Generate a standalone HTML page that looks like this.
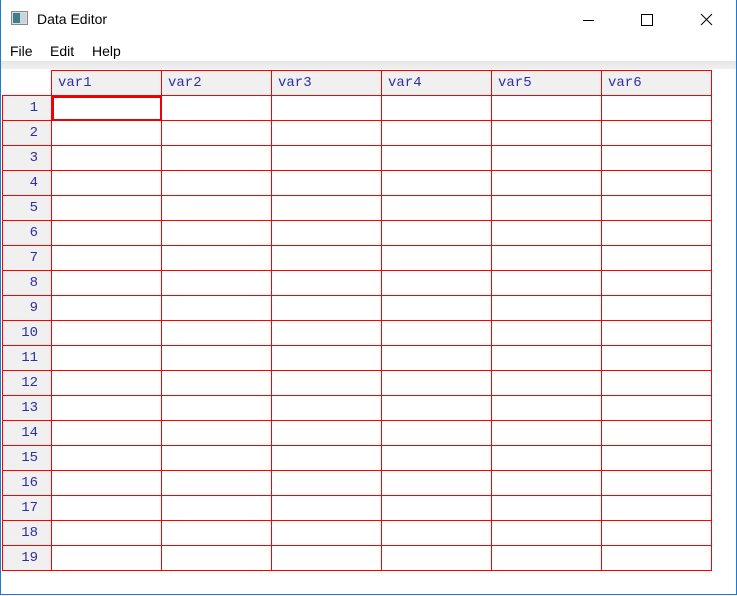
<!DOCTYPE html><html><head><style>
body{margin:0;width:737px;height:596px;background:#fff;position:relative;overflow:hidden;font-family:"Liberation Sans",sans-serif}
.win{position:absolute;left:0;top:0;width:735px;height:594px;border:1px solid #1a7ad4;border-top:none}
.t{position:absolute;font-size:14px;color:#000}
.strip{position:absolute;left:1px;top:61px;width:735px;height:8px;background:linear-gradient(#e6e6e6,#f0f0f0)}
.hdr{position:absolute;left:51px;top:70px;width:661px;height:25px;background:#f0f0f0}
.rh{position:absolute;left:2px;top:95px;width:49px;height:475px;background:#f0f0f0}
.vl{position:absolute;width:1px;background:#f00}
.hl{position:absolute;height:1px;background:#f00}
.m{position:absolute;font-family:"Liberation Mono",monospace;font-size:14px;color:#2f2fa0;line-height:25px}
.r{width:36px;text-align:right;left:2px}
</style></head><body>
<div class="win"></div>
<svg style="position:absolute;left:11px;top:11px" width="18" height="16"><rect x="0.5" y="0.5" width="16" height="13" fill="#ddd" stroke="#888"/><rect x="2" y="2" width="7" height="10" fill="#3f7f88"/><rect x="9" y="2" width="6" height="10" fill="#c8d4e0"/></svg>
<div class="t" style="left:37px;top:11px">Data Editor</div>
<svg style="position:absolute;left:580px;top:12px" width="140" height="16" fill="none" stroke="#000" stroke-width="1"><path d="M3 8.5H14"/><rect x="61.5" y="2.5" width="11" height="11"/><path d="M121 2L132 13M132 2L121 13"/></svg>
<div class="t" style="left:10px;top:43px">File</div>
<div class="t" style="left:50px;top:43px">Edit</div>
<div class="t" style="left:92px;top:43px">Help</div>
<div class="strip"></div>
<div class="hdr"></div><div class="rh"></div>
<div class="vl" style="left:2px;top:95px;height:476px"></div>
<div class="vl" style="left:51px;top:70px;height:501px"></div>
<div class="vl" style="left:161px;top:70px;height:501px"></div>
<div class="vl" style="left:271px;top:70px;height:501px"></div>
<div class="vl" style="left:381px;top:70px;height:501px"></div>
<div class="vl" style="left:491px;top:70px;height:501px"></div>
<div class="vl" style="left:601px;top:70px;height:501px"></div>
<div class="vl" style="left:711px;top:70px;height:501px"></div>
<div class="hl" style="left:51px;top:70px;width:661px"></div>
<div class="hl" style="left:2px;top:95px;width:710px;height:476px;background:repeating-linear-gradient(#f00 0 1px,transparent 1px 25px)"></div>
<div style="position:absolute;left:52px;top:96px;width:106px;height:21px;border:2px solid #e00"></div>
<div class="m" style="left:58px;top:71px">var1</div>
<div class="m" style="left:168px;top:71px">var2</div>
<div class="m" style="left:278px;top:71px">var3</div>
<div class="m" style="left:388px;top:71px">var4</div>
<div class="m" style="left:498px;top:71px">var5</div>
<div class="m" style="left:608px;top:71px">var6</div>
<div class="m r" style="top:96px">1</div>
<div class="m r" style="top:121px">2</div>
<div class="m r" style="top:146px">3</div>
<div class="m r" style="top:171px">4</div>
<div class="m r" style="top:196px">5</div>
<div class="m r" style="top:221px">6</div>
<div class="m r" style="top:246px">7</div>
<div class="m r" style="top:271px">8</div>
<div class="m r" style="top:296px">9</div>
<div class="m r" style="top:321px">10</div>
<div class="m r" style="top:346px">11</div>
<div class="m r" style="top:371px">12</div>
<div class="m r" style="top:396px">13</div>
<div class="m r" style="top:421px">14</div>
<div class="m r" style="top:446px">15</div>
<div class="m r" style="top:471px">16</div>
<div class="m r" style="top:496px">17</div>
<div class="m r" style="top:521px">18</div>
<div class="m r" style="top:546px">19</div>
</body></html>
